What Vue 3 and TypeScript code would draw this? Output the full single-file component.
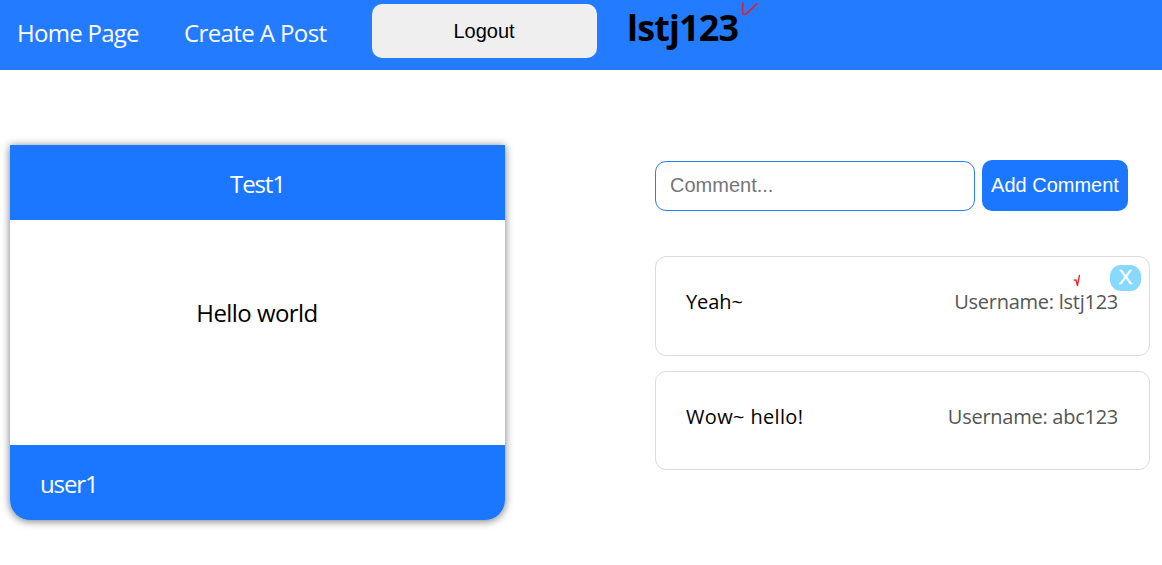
<script setup lang="ts">
import { ref } from 'vue'

interface PostComment {
  id: number
  body: string
  username: string
  own: boolean
}

const username = 'lstj123'
const draft = ref('')
const comments = ref<PostComment[]>([
  { id: 1, body: 'Yeah~', username: 'lstj123', own: true },
  { id: 2, body: 'Wow~ hello!', username: 'abc123', own: false },
])

function addComment(): void {
  if (!draft.value) return
  comments.value.push({ id: Date.now(), body: draft.value, username, own: true })
  draft.value = ''
}

function removeComment(id: number): void {
  comments.value = comments.value.filter((c) => c.id !== id)
}
</script>

<template>
  <div class="page">
    <nav class="navbar">
      <a class="link home">Home Page</a>
      <a class="link create">Create A Post</a>
      <button class="logout">Logout</button>
      <h1 class="user">
        <span class="user-name">{{ username }}</span>
        <svg class="tick" width="20" height="18" viewBox="0 0 20 18">
          <path d="M3.2 3C2.4 6 1.8 13.8 4 14.6C6.5 15 13 7 17 3.6" />
        </svg>
      </h1>
    </nav>

    <main class="content">
      <article class="post">
        <header class="title"><span>Test1</span></header>
        <div class="body"><span>Hello world</span></div>
        <footer class="footer"><span>user1</span></footer>
      </article>

      <section class="comments">
        <div class="entry">
          <input v-model="draft" type="text" placeholder="Comment..." />
          <button class="add" @click="addComment">Add Comment</button>
        </div>
        <div v-for="c in comments" :key="c.id" class="comment" :class="{ own: c.own }">
          <span class="text">{{ c.body }}</span>
          <span class="author">Username: {{ c.username }}</span>
          <template v-if="c.own">
            <svg class="small-tick" width="10" height="14" viewBox="0 0 10 14">
              <path d="M1.2 6.2L3 5.8L4.4 11.6L6.4 1.5" />
            </svg>
            <button class="remove" @click="removeComment(c.id)">X</button>
          </template>
        </div>
      </section>
    </main>
  </div>
</template>

<style>
body {
  margin: 0;
  background: #fff;
}
</style>

<style scoped>
.page {
  width: 1162px;
  height: 565px;
  overflow: hidden;
  font-family: 'Segoe UI', 'Open Sans', 'Noto Sans', sans-serif;
  color: #000;
}
button,
input {
  box-sizing: border-box;
  margin: 0;
  font: 20px 'Liberation Sans', Arial, sans-serif;
}
.navbar {
  display: flex;
  align-items: flex-start;
  height: 70px;
  background: #237bff;
}
.link {
  flex: none;
  box-sizing: border-box;
  padding: 16px 0 0 17px;
  font-size: 24px;
  line-height: 33px;
  color: #fff;
  white-space: nowrap;
}
.home {
  width: 167px;
  letter-spacing: -0.72px;
}
.create {
  width: 205px;
  letter-spacing: -0.6px;
}
.logout {
  flex: none;
  width: 225px;
  height: 54px;
  margin-top: 4px;
  padding: 0 7px 0 6px;
  border: 0;
  border-radius: 10px;
  background: #efefef;
  color: #000;
}
.user {
  position: relative;
  margin: 3px 0 0 30px;
  font-size: 36px;
  line-height: 49px;
  font-weight: 700;
  letter-spacing: -0.85px;
}
.tick {
  position: absolute;
  left: 113px;
  top: -3px;
}
.tick path,
.small-tick path {
  fill: none;
  stroke: #e0202c;
  stroke-width: 1.6;
  stroke-linecap: round;
  stroke-linejoin: round;
}
.small-tick path {
  stroke: #ee1c24;
  stroke-width: 1.3;
}
.content {
  display: flex;
  align-items: flex-start;
  padding: 75px 12px 0 10px;
}
.post {
  width: 495px;
  height: 375px;
  border-radius: 0 0 20px 20px;
  box-shadow: 0 1px 8px rgba(0, 0, 0, 0.55);
  font-size: 24px;
  line-height: 33px;
}
.title,
.footer {
  display: flex;
  align-items: center;
  box-sizing: border-box;
  height: 75px;
  padding-top: 1px;
  background: #1b77ff;
  color: #fff;
  letter-spacing: -1.1px;
}
.title {
  justify-content: center;
}
.body {
  box-sizing: border-box;
  height: 225px;
  padding: 76px 1px 0 0;
  text-align: center;
  background: #fff;
  letter-spacing: -0.55px;
}
.footer {
  padding-left: 30px;
  border-radius: 0 0 20px 20px;
}
.comments {
  width: 495px;
  margin: 15px 0 0 150px;
}
.entry {
  display: flex;
  align-items: flex-end;
  gap: 7px;
  height: 51px;
  margin-bottom: 45px;
}
.entry input {
  width: 320px;
  height: 50px;
  padding: 0 14px 2px;
  border: 1px solid #2b7de9;
  border-radius: 11px;
  outline: none;
  background: #fff;
}
.entry input::placeholder {
  color: #757575;
}
.add {
  width: 146px;
  height: 51px;
  padding: 0;
  border: 0;
  border-radius: 10px;
  background: #1b77ff;
  color: #fff;
  white-space: nowrap;
}
.comment {
  position: relative;
  display: flex;
  justify-content: space-between;
  box-sizing: border-box;
  height: 99px;
  padding: 31px 31px 0 30px;
  border: 1px solid #dcdcdc;
  border-radius: 11px;
  font-size: 20px;
  line-height: 28px;
}
.comment .text {
  letter-spacing: 0.35px;
}
.comment.own {
  height: 100px;
  margin-bottom: 15px;
}
.comment.own .text {
  letter-spacing: -0.1px;
}
.author {
  color: #555;
  letter-spacing: -0.26px;
}
.remove {
  position: absolute;
  top: 8px;
  right: 8px;
  width: 31px;
  height: 26px;
  padding: 0 0 2px;
  border: 0;
  border-radius: 11px;
  background: #87d9ff;
  color: #fff;
  font-size: 21px;
  line-height: 24px;
  -webkit-text-stroke: 0.3px #fff;
}
.small-tick {
  position: absolute;
  left: 417px;
  top: 17px;
}
</style>
